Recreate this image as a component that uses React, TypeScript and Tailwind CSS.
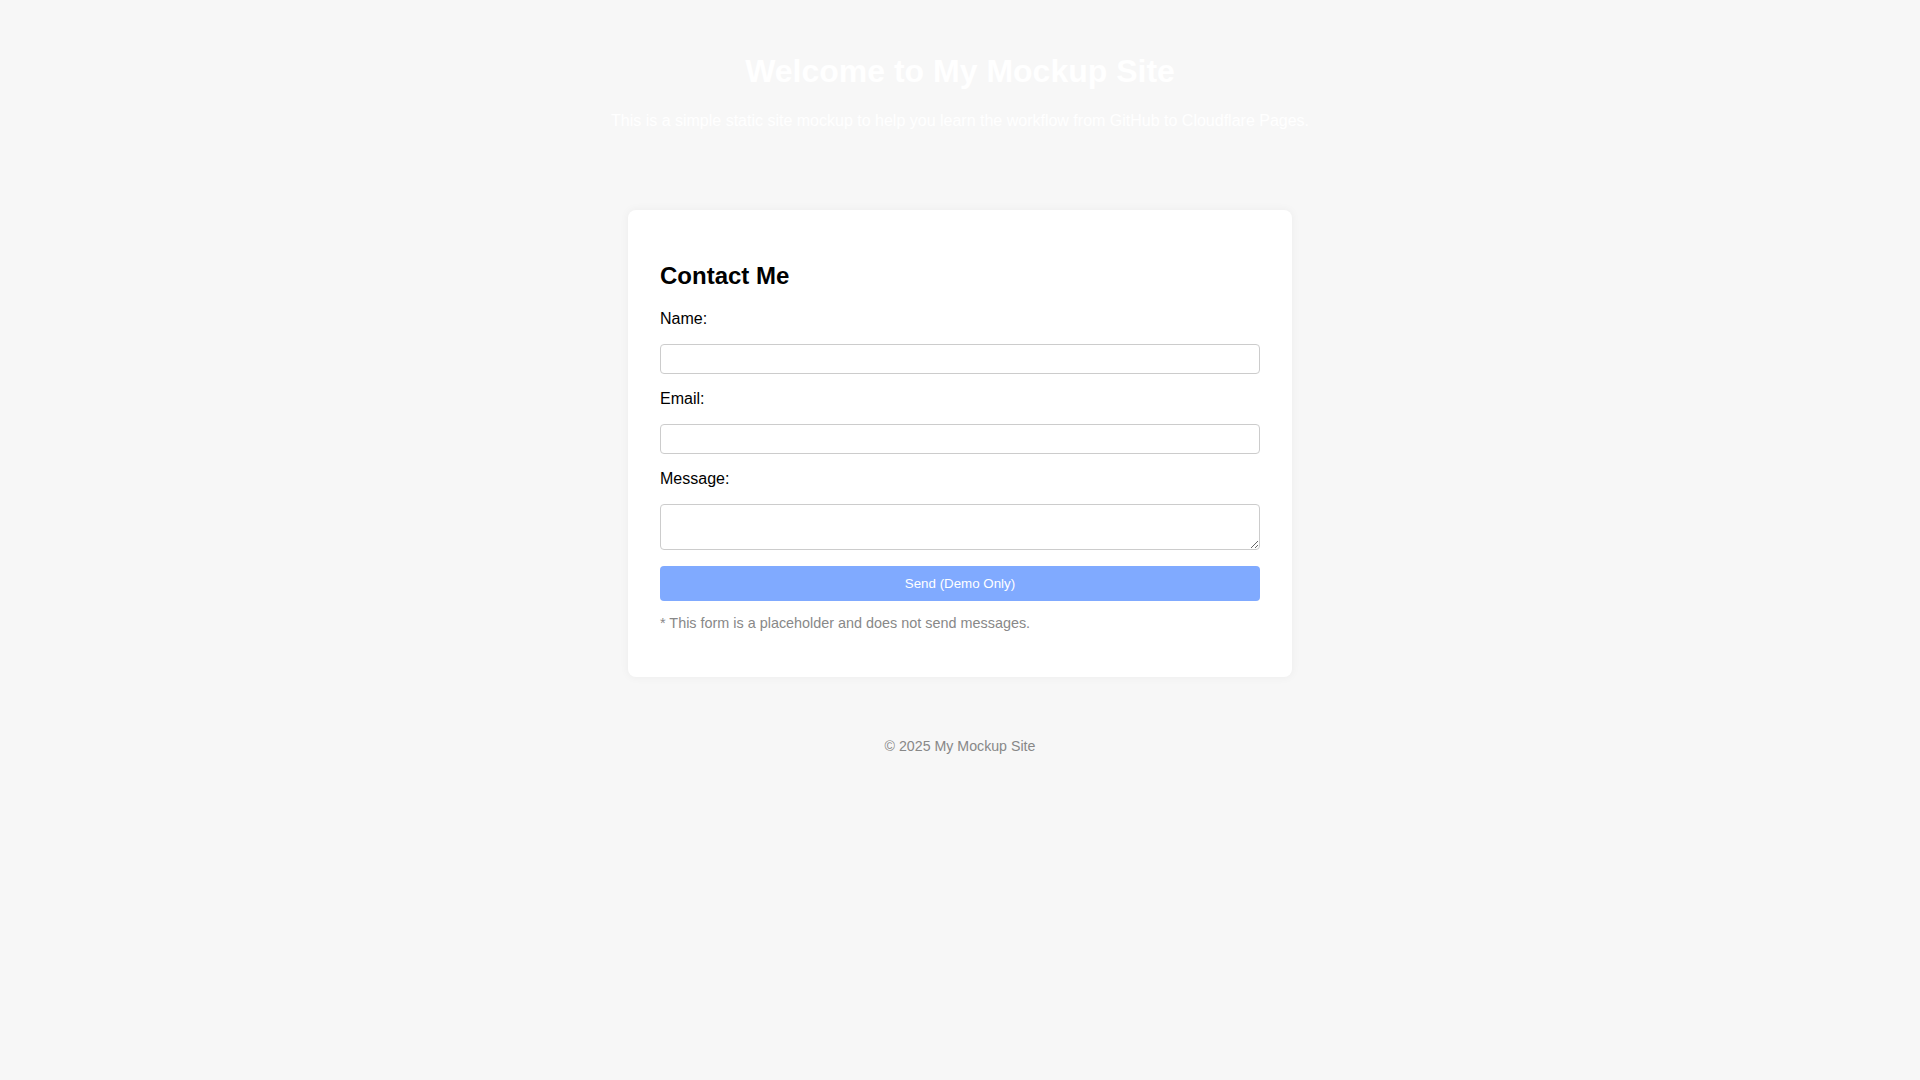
export default function App() {
  return (
    <div className="min-h-screen bg-[#f7f7f7] font-['Liberation_Sans',Arial,sans-serif] text-black">
      <header className="px-8 py-8 text-center text-white">
        <h1 className="my-[21.44px] text-[32px] font-bold leading-[37px]">
          Welcome to My Mockup Site
        </h1>
        <p className="my-4 text-base leading-[18.4px]">
          This is a simple static site mockup to help you learn the workflow from GitHub to Cloudflare Pages.
        </p>
      </header>

      <main className="mx-auto mt-[32px] w-[664px] rounded-lg bg-white p-8 shadow-[0_0_10px_rgba(0,0,0,0.05)]">
        <h2 className="my-[20px] text-2xl font-bold leading-[27.6px]">Contact Me</h2>
        <form className="flex flex-col" onSubmit={(e) => e.preventDefault()}>
          <label className="block text-base leading-[18.4px]">Name:</label>
          <input
            type="text"
            className="mt-4 mb-4 h-[30px] w-full rounded border border-[#ccc] px-2 text-[13.33px] outline-none"
          />
          <label className="block text-base leading-[18.4px]">Email:</label>
          <input
            type="email"
            className="mt-[15.5px] mb-4 h-[30px] w-full rounded border border-[#ccc] px-2 text-[13.33px] outline-none"
          />
          <label className="block text-base leading-[18.4px]">Message:</label>
          <textarea
            rows={2}
            className="mt-[15.5px] mb-4 h-[46px] w-full rounded border border-[#ccc] px-2 py-1.5 text-[13.33px] outline-none"
          />
          <button
            type="submit"
            className="h-[35px] w-full rounded bg-[#80aaff] text-[13.33px] text-white"
          >
            Send (Demo Only)
          </button>
        </form>
        <p className="mt-[14px] mb-[14px] text-[14.4px] leading-4 text-[#888]">
          * This form is a placeholder and does not send messages.
        </p>
      </main>

      <footer className="pt-[61px] text-center text-[14.2px] leading-4 text-[#888]">
        © 2025 My Mockup Site
      </footer>
    </div>
  );
}
